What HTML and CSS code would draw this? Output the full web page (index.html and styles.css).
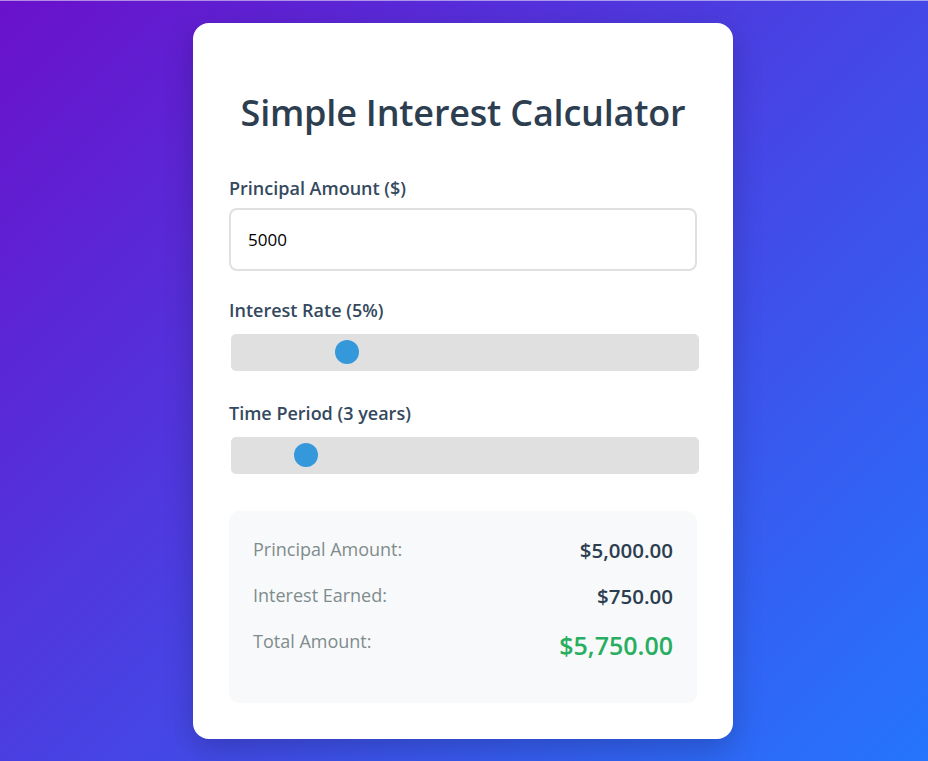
FILE: index.html
```html
<!DOCTYPE html>
<html lang="en">
<head>
<meta charset="utf-8">
<title>Simple Interest Calculator</title>
<link rel="stylesheet" href="styles.css">
</head>
<body>
  <main class="card">
    <h1 class="title">Simple Interest Calculator</h1>

    <div class="group">
      <label class="label" for="principal">Principal Amount ($)</label>
      <input class="text-input" id="principal" type="number" value="5000">
    </div>

    <div class="group">
      <label class="label" for="rate">Interest Rate (5%)</label>
      <input class="range" id="rate" type="range" min="1" max="18" step="1" value="5">
    </div>

    <div class="group">
      <label class="label" for="time">Time Period (3 years)</label>
      <input class="range" id="time" type="range" min="1" max="15" step="1" value="3">
    </div>

    <section class="results">
      <div class="row">
        <span class="row-label">Principal Amount:</span>
        <span class="row-value">$5,000.00</span>
      </div>
      <div class="row">
        <span class="row-label">Interest Earned:</span>
        <span class="row-value">$750.00</span>
      </div>
      <div class="row">
        <span class="row-label">Total Amount:</span>
        <span class="row-value total">$5,750.00</span>
      </div>
    </section>
  </main>
</body>
</html>
```

FILE: styles.css
```css
* {
  box-sizing: border-box;
}

html, body {
  margin: 0;
  padding: 0;
}

body {
  min-height: 100vh;
  display: flex;
  align-items: center;
  justify-content: center;
  padding-right: 2px;
  background: linear-gradient(135deg, #6a11cb 0%, #2575fc 100%);
  box-shadow: inset 0 1px 0 rgba(255, 255, 255, 0.5);
  font-family: "Open Sans", "Noto Sans", "Liberation Sans", sans-serif;
}

.card {
  width: 540px;
  background: #ffffff;
  border-radius: 16px;
  padding: 36px;
  display: flex;
  flex-direction: column;
  box-shadow: 0 10px 30px rgba(0, 0, 0, 0.2);
}

.title {
  margin: 31px 0 40px;
  font-size: 36px;
  line-height: 46px;
  font-weight: 600;
  color: #2c3e50;
  text-align: center;
  letter-spacing: -0.2px;
}

.group {
  display: flex;
  flex-direction: column;
  margin-bottom: 27px;
}

.label {
  font-size: 18px;
  line-height: 24px;
  font-weight: 600;
  color: #34495e;
  margin-bottom: 8px;
}

.text-input {
  width: 100%;
  height: 63px;
  padding: 0 17px;
  border: 2px solid #e0e0e0;
  border-radius: 8px;
  font-family: inherit;
  font-size: 17px;
  color: #000;
  background: #fff;
  outline: none;
}

.range {
  -webkit-appearance: none;
  appearance: none;
  display: block;
  width: 100%;
  height: 37px;
  margin: 4px 2px 3px 2px;
  background: #e0e0e0;
  border-radius: 5px;
  outline: none;
}

.range::-webkit-slider-runnable-track {
  height: 37px;
  background: transparent;
  border: none;
}

.range::-webkit-slider-thumb {
  -webkit-appearance: none;
  appearance: none;
  width: 24px;
  height: 24px;
  margin-top: 6.5px;
  border-radius: 50%;
  background: #3498db;
  border: none;
  cursor: pointer;
}

.results {
  margin-top: 7px;
  background: #f8f9fa;
  border-radius: 10px;
  padding: 24px 24px 24px;
}

.row {
  display: flex;
  justify-content: space-between;
  margin-bottom: 16px;
}

.row-label {
  font-size: 18px;
  line-height: 28px;
  color: #7f8c8d;
}

.row-value {
  font-size: 20.5px;
  line-height: 30px;
  font-weight: 600;
  color: #2c3e50;
}

.row-value.total {
  font-size: 25px;
  line-height: 36px;
  color: #27ae60;
}
```
